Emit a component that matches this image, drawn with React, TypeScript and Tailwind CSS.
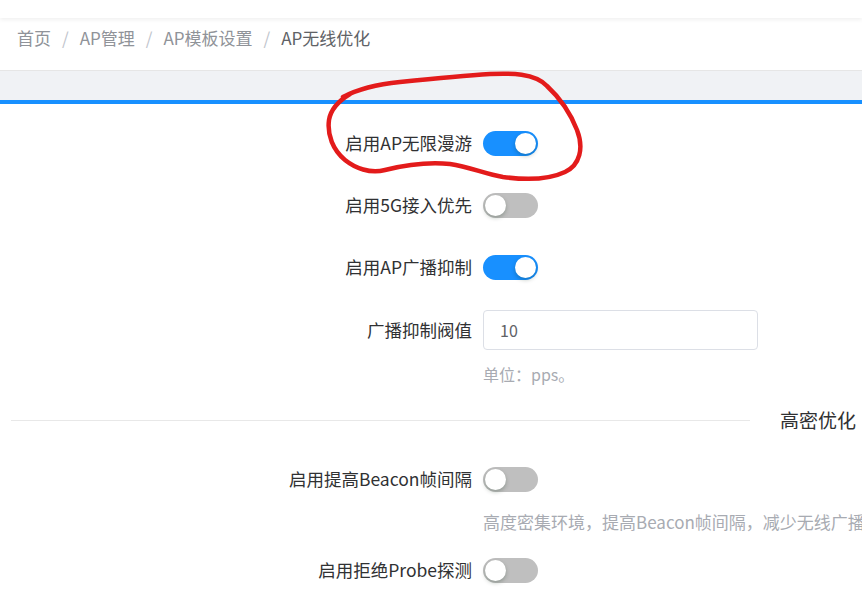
import React from "react";

const font = { fontFamily: '"Noto Sans CJK SC", "Noto Sans", sans-serif' };

function Switch({ on }: { on: boolean }) {
  return (
    <div
      className={`relative h-[25px] w-[55px] rounded-full ${on ? "bg-[#1890ff]" : "bg-[#bfbfbf]"}`}
    >
      <div
        className={`absolute top-[2px] h-[21px] w-[21px] rounded-full bg-white shadow-[0_2px_4px_rgba(0,35,11,0.25)] ${on ? "left-[32px]" : "left-[2px]"}`}
      />
    </div>
  );
}

function Row({ label, children, className = "" }: { label: string; children: React.ReactNode; className?: string }) {
  return (
    <div className={`flex h-10 items-center ${className}`}>
      <div className="w-[483px] shrink-0 pr-[11px] text-right text-[17.5px] text-[#303133] whitespace-nowrap">{label}</div>
      <div className="flex items-center">{children}</div>
    </div>
  );
}

export default function App() {
  return (
    <div className="relative h-[597px] w-[862px] overflow-hidden bg-white" style={font}>
      {/* top header */}
      <div className="h-[18px] bg-white shadow-[0_2px_4px_rgba(0,0,0,0.06)]" />
      {/* breadcrumb */}
      <div className="flex h-[52px] items-center pl-[17px] pb-[12px] text-[17px]">
        <span className="text-[#909399]">首页</span>
        <span className="mx-[11px] text-[#c0c4cc]">/</span>
        <span className="text-[#909399]">AP管理</span>
        <span className="mx-[11px] text-[#c0c4cc]">/</span>
        <span className="text-[#909399]">AP模板设置</span>
        <span className="mx-[11px] text-[#c0c4cc]">/</span>
        <span className="text-[#606266]">AP无线优化</span>
      </div>
      {/* grey band */}
      <div className="h-[30px] border-t border-[#e6e6e6] bg-[#f0f2f5]" />
      <div className="h-[4px] bg-[#1890ff]" />

      {/* form */}
      <div className="pt-[19px]">
        <Row label="启用AP无限漫游">
          <Switch on />
        </Row>
        <Row label="启用5G接入优先" className="mt-[22px]">
          <Switch on={false} />
        </Row>
        <Row label="启用AP广播抑制" className="mt-[22px]">
          <Switch on />
        </Row>
        <Row label="广播抑制阀值" className="mt-[23px]">
          <div className="flex h-10 w-[275px] items-center rounded-[4px] border border-[#dcdfe6] px-[16px] text-[16px] text-[#606266]">
            10
          </div>
        </Row>
        <div className="flex h-[48px] items-center pl-[483px] text-[16px] text-[#a8abb2]">单位：pps。</div>

        {/* divider */}
        <div className="mt-[10px] flex h-[24px] items-center">
          <div className="ml-[11px] h-px w-[739px] bg-[#e8e8e8]" />
          <div className="ml-[30px] whitespace-nowrap text-[19px] text-[#303133]">高密优化</div>
        </div>

        <Row label="启用提高Beacon帧间隔" className="mt-[27px]">
          <Switch on={false} />
        </Row>
        <div className="flex h-[46px] items-center whitespace-nowrap pl-[483px] text-[17px] text-[#a8abb2]">
          高度密集环境，提高Beacon帧间隔，减少无线广播
        </div>
        <Row label="启用拒绝Probe探测" className="mt-[5px]">
          <Switch on={false} />
        </Row>
      </div>

      {/* red annotation */}
      <svg className="pointer-events-none absolute left-0 top-0" width="862" height="597">
        <path
          d="M343 97 C 360 88, 380 84, 400 82 C 430 79, 460 76, 490 74 C 510 73, 535 73, 547 86 C 560 98, 570 112, 577 130 C 584 148, 580 165, 565 172 C 548 180, 525 180, 503 177 C 485 174, 470 167, 450 164 C 430 162, 405 165, 385 170 C 370 174, 355 168, 345 160 C 333 150, 327 135, 329 120 C 331 108, 340 100, 350 94"
          fill="none"
          stroke="#e31b1b"
          strokeWidth="4.5"
          strokeLinecap="round"
          strokeLinejoin="round"
        />
      </svg>
    </div>
  );
}
